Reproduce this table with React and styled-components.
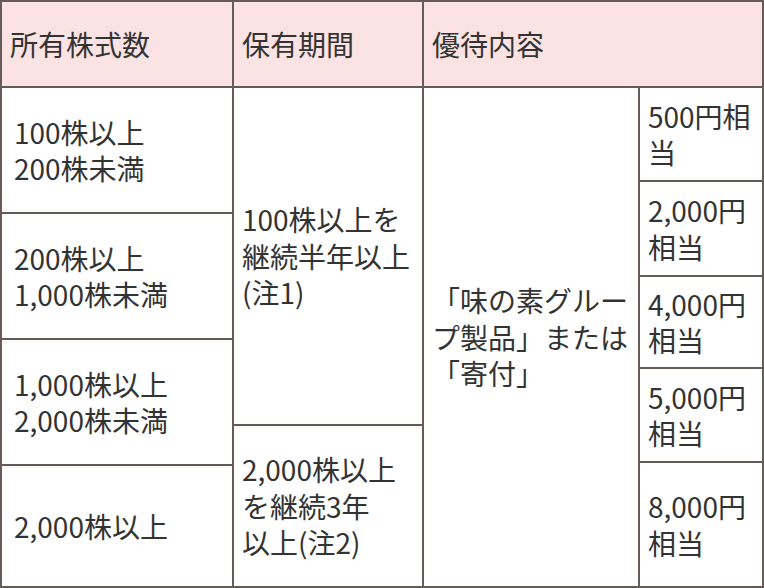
import React from 'react'
import styled, { createGlobalStyle } from 'styled-components'

const GlobalStyle = createGlobalStyle`
  body {
    margin: 0;
    background: #ffffff;
    font-family: "Noto Sans CJK JP", "Noto Sans", sans-serif;
    color: #333333;
  }
`

const line = '#655b59'

const Table = styled.div`
  box-sizing: border-box;
  width: 764px;
  height: 588px;
  display: grid;
  grid-template-columns: 230px 188px 214px 122px;
  grid-template-rows: 84px 498px;
  gap: 2px;
  padding: 2px;
  background: ${line};
`

const HeadCell = styled.div`
  grid-column: span ${(p) => p.$span || 1};
  display: flex;
  align-items: center;
  padding: 0 8px;
  background: #fbe3e4;
  font-size: 28px;
  line-height: 1.3;
`

const Stack = styled.div`
  display: flex;
  flex-direction: column;
  gap: 2px;
`

const Cell = styled.div`
  box-sizing: border-box;
  height: ${(p) => (p.$h ? `${p.$h}px` : '100%')};
  display: flex;
  align-items: center;
  padding: 0 8px 0 ${(p) => p.$left || 8}px;
  background: #ffffff;
  font-size: 28px;
  line-height: 1.3;
`

const shares = [
  { h: 124, text: ['100株以上', '200株未満'] },
  { h: 124, text: ['200株以上', '1,000株未満'] },
  { h: 124, text: ['1,000株以上', '2,000株未満'] },
  { h: 120, text: ['2,000株以上'] },
]

const periods = [
  { h: 336, text: ['100株以上を', '継続半年以上', '(注1)'] },
  { h: 160, text: ['2,000株以上', 'を継続3年', '以上(注2)'] },
]

const amounts = [
  { h: 92, text: ['500円相', '当'] },
  { h: 93, text: ['2,000円', '相当'] },
  { h: 90, text: ['4,000円', '相当'] },
  { h: 92, text: ['5,000円', '相当'] },
  { h: 123, text: ['8,000円', '相当'] },
]

function Lines({ text }) {
  return (
    <div>
      {text.map((t, i) => (
        <React.Fragment key={i}>
          {i > 0 && <br />}
          {t}
        </React.Fragment>
      ))}
    </div>
  )
}

export default function App() {
  return (
    <>
      <GlobalStyle />
      <Table>
        <HeadCell>所有株式数</HeadCell>
        <HeadCell>保有期間</HeadCell>
        <HeadCell $span={2}>優待内容</HeadCell>

        <Stack>
          {shares.map((r, i) => (
            <Cell key={i} $h={r.h} $left={12}>
              <Lines text={r.text} />
            </Cell>
          ))}
        </Stack>
        <Stack>
          {periods.map((r, i) => (
            <Cell key={i} $h={r.h}>
              <Lines text={r.text} />
            </Cell>
          ))}
        </Stack>
        <Cell>
          <Lines text={['「味の素グルー', 'プ製品」または', '「寄付」']} />
        </Cell>
        <Stack>
          {amounts.map((r, i) => (
            <Cell key={i} $h={r.h}>
              <Lines text={r.text} />
            </Cell>
          ))}
        </Stack>
      </Table>
    </>
  )
}
